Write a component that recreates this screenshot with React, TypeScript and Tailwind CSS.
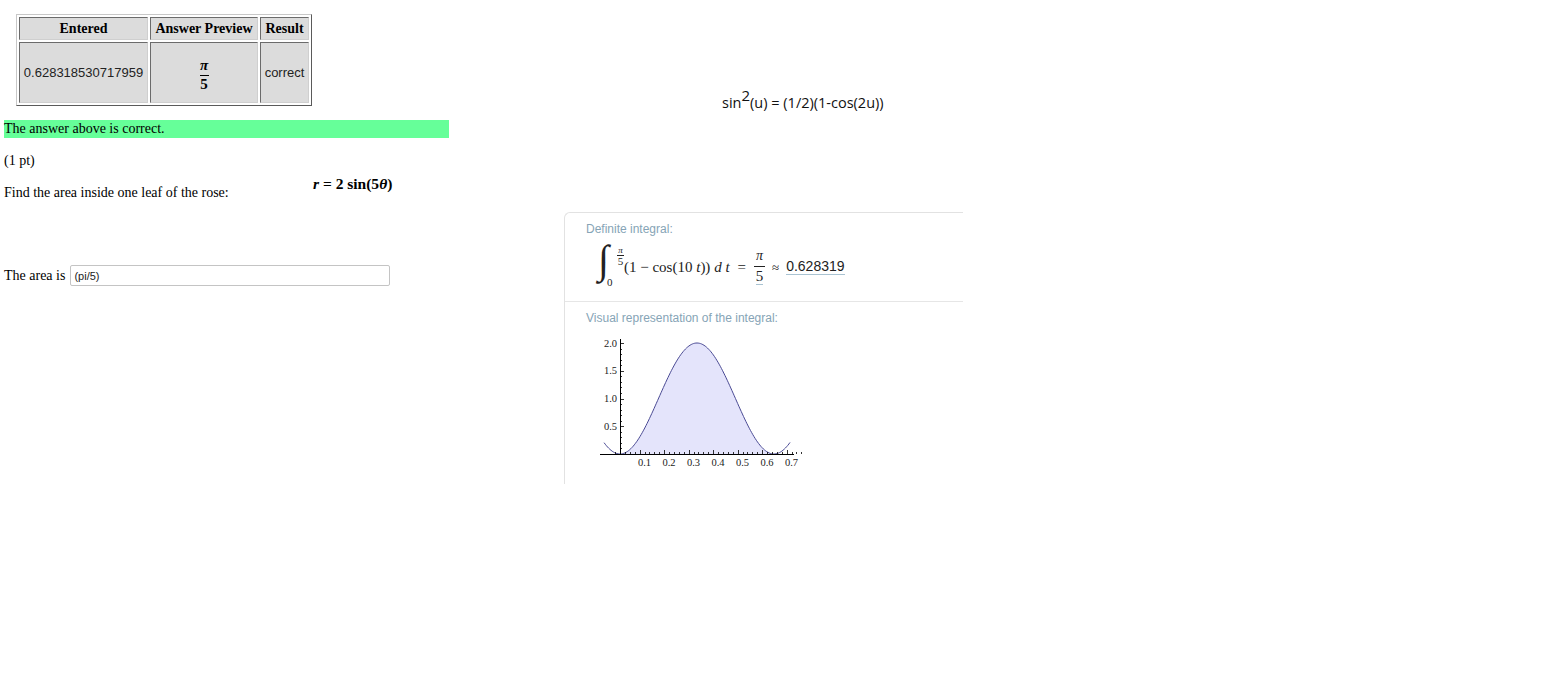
import React from "react";

const serif = "font-['Liberation_Serif','Times_New_Roman',serif]";
const sans = "font-['Liberation_Sans',Arial,sans-serif]";

// plot scale: 0.1 on x = 24.5px, 0.5 on y = 27.75px
const X0 = 25;
const Y0 = 120;
const SX = 245;
const SY = 55.5;

const px = (t: number) => X0 + t * SX;
const py = (v: number) => Y0 - v * SY;
const f = (t: number) => 1 - Math.cos(10 * t);

const buildCurve = (from: number, to: number, steps: number) => {
    const pts: string[] = [];
    for (let i = 0; i <= steps; i++) {
        const t = from + ((to - from) * i) / steps;
        pts.push(`${px(t).toFixed(2)},${py(f(t)).toFixed(2)}`);
    }
    return pts;
};

const IntegralPlot = () => {
    const curve = buildCurve(-0.065, 0.694, 160);
    const area = buildCurve(0, Math.PI / 5, 120);
    const yMinor = Array.from({ length: 21 }, (_, i) => i * 0.1);
    const xMinor = Array.from({ length: 39 }, (_, i) => -0.02 + i * 0.02);

    return (
        <svg width="210" height="140" viewBox="0 0 210 140" className="block">
            <polygon
                points={`${px(0)},${py(0)} ${area.join(" ")} ${px(Math.PI / 5)},${py(0)}`}
                fill="#e4e4fb"
            />
            <polyline points={curve.join(" ")} fill="none" stroke="#4a4a94" strokeWidth="1" />
            {/* axes */}
            <line x1="5" y1={Y0 + 0.5} x2="199" y2={Y0 + 0.5} stroke="#000" strokeWidth="1" />
            <line x1={X0 + 0.5} y1="5" x2={X0 + 0.5} y2={Y0} stroke="#000" strokeWidth="1" />
            {yMinor.map((v, i) => (
                <line
                    key={"y" + i}
                    x1={X0}
                    x2={X0 + (i % 5 === 0 ? 4 : 2)}
                    y1={Math.round(py(v)) + 0.5}
                    y2={Math.round(py(v)) + 0.5}
                    stroke="#000"
                    strokeWidth="0.8"
                />
            ))}
            {xMinor.map((t, i) => (
                <line
                    key={"x" + i}
                    x1={Math.round(px(t)) + 0.5}
                    x2={Math.round(px(t)) + 0.5}
                    y1={Y0}
                    y2={Y0 - ((i + 1) % 5 === 1 && i > 0 ? 4 : 2)}
                    stroke="#000"
                    strokeWidth="0.8"
                />
            ))}
            {[0.5, 1, 1.5, 2].map((v) => (
                <text
                    key={v}
                    x={X0 - 3}
                    y={py(v) + 3.5}
                    textAnchor="end"
                    fontSize="10.5"
                    fontFamily="Liberation Serif, serif"
                    fill="#222"
                >
                    {v.toFixed(1)}
                </text>
            ))}
            {[0.1, 0.2, 0.3, 0.4, 0.5, 0.6, 0.7].map((t) => (
                <text
                    key={t}
                    x={px(t)}
                    y={Y0 + 12}
                    textAnchor="middle"
                    fontSize="10.5"
                    fontFamily="Liberation Serif, serif"
                    fill="#222"
                >
                    {t.toFixed(1)}
                </text>
            ))}
        </svg>
    );
};

const App = () => {
    const cellBorder = "border border-t-[#6b6b6b] border-l-[#6b6b6b] border-b-[#cfcfcf] border-r-[#cfcfcf] bg-[#dcdcdc]";

    return (
        <div className={`flex min-h-[679px] bg-white text-black ${serif}`}>
            {/* left column */}
            <div className="w-[564px] shrink-0">
                <table className="ml-[16px] mt-[14px] border border-t-[#c8c8c8] border-l-[#c8c8c8] border-b-[#5a5a5a] border-r-[#5a5a5a] border-separate border-spacing-[2px]">
                    <tbody>
                        <tr className="h-[22px]">
                            <th className={`${cellBorder} w-[129px] text-[14px] font-bold`}>Entered</th>
                            <th className={`${cellBorder} w-[108px] text-[14px] font-bold`}>Answer Preview</th>
                            <th className={`${cellBorder} w-[49px] text-[14px] font-bold`}>Result</th>
                        </tr>
                        <tr className="h-[61px]">
                            <td className={`${cellBorder} ${sans} text-[13px] text-center text-[#222]`}>0.628318530717959</td>
                            <td className={`${cellBorder} text-center`}>
                                <span className="inline-flex flex-col items-center font-bold text-[15px] leading-none">
                                    <span className="italic pb-[2px]">π</span>
                                    <span className="w-[9px] border-t border-black"></span>
                                    <span className="pt-[1px]">5</span>
                                </span>
                            </td>
                            <td className={`${cellBorder} ${sans} text-[13px] text-center text-[#222]`}>correct</td>
                        </tr>
                    </tbody>
                </table>

                <div className="ml-[4px] mt-[14px] w-[445px] h-[18px] bg-[#66ff99] text-[14px] leading-[18px]">
                    The answer above is correct.
                </div>

                <p className="ml-[4px] mt-[14px] text-[14px] leading-[18px]">(1 pt)</p>

                <div className="flex mt-[5px] ml-[4px]">
                    <p className="w-[309px] pt-[9px] text-[14px] leading-[18px]">Find the area inside one leaf of the rose:</p>
                    <p className="text-[15.5px] font-bold leading-[18px]">
                        <span className="italic">r</span> = 2 sin(5<span className="italic">θ</span>)
                    </p>
                </div>

                <div className="flex items-center ml-[4px] mt-[63px]">
                    <span className="text-[14px] mr-[5px]">The area is</span>
                    <input
                        readOnly
                        value="(pi/5)"
                        className={`w-[320px] h-[21px] border border-[#c4c4c4] rounded-[2px] px-[3px] ${sans} text-[11px] text-[#222] outline-none`}
                    />
                </div>
            </div>

            {/* right column */}
            <div className="flex flex-col">
                <p className="ml-[158px] mt-[93px] font-['Open_Sans',sans-serif] text-[14.5px] leading-[20px] text-[#111] whitespace-nowrap">
                    sin<sup className="text-[15px] -top-[7px]">2</sup>(u) = (1/2)(1-cos(2u))
                </p>

                <div className="mt-[99px] w-[399px] h-[272px] border-l border-t border-[#e2e2e2] rounded-tl-[6px]">
                    <div className="h-[89px] border-b border-[#e6e6e6]">
                        <p className={`pl-[21px] pt-[9px] ${sans} text-[12px] leading-[14px] text-[#86a4b6]`}>Definite integral:</p>
                        <div className="flex items-center ml-[33px] mt-[10px] text-[15px] text-[#222] leading-none">
                            <span className="relative w-[26px] h-[42px]">
                                <span className="absolute left-0 top-[-6px] text-[40px] italic leading-none">∫</span>
                                <span className="absolute left-[19px] top-[0px] inline-flex flex-col items-center leading-none">
                                    <span className="italic text-[9px]">π</span>
                                    <span className="w-[7px] border-t border-[#222]"></span>
                                    <span className="text-[11px]">5</span>
                                </span>
                                <span className="absolute left-[9px] top-[31px] text-[11px] leading-none">0</span>
                            </span>
                            <span>(1 − cos(10 <span className="italic">t</span>)) <span className="italic">d t</span></span>
                            <span className="mx-[8px]">=</span>
                            <span className="inline-flex flex-col items-center leading-none">
                                <span className="italic text-[14px] pb-[3px]">π</span>
                                <span className="w-[11px] border-t border-[#222]"></span>
                                <span className="pt-[2px] text-[15px] border-b border-[#a9c3d2]">5</span>
                            </span>
                            <span className="text-[13px] mx-[7px]">≈</span>
                            <span className={`${sans} text-[14px] border-b border-[#a9c3d2] pb-[1px]`}>0.628319</span>
                        </div>
                    </div>
                    <div>
                        <p className={`pl-[21px] pt-[9px] ${sans} text-[12px] leading-[14px] text-[#86a4b6]`}>
                            Visual representation of the integral:
                        </p>
                        <div className="ml-[30px] mt-[9px]">
                            <IntegralPlot />
                        </div>
                    </div>
                </div>
            </div>
        </div>
    );
};

export default App;
